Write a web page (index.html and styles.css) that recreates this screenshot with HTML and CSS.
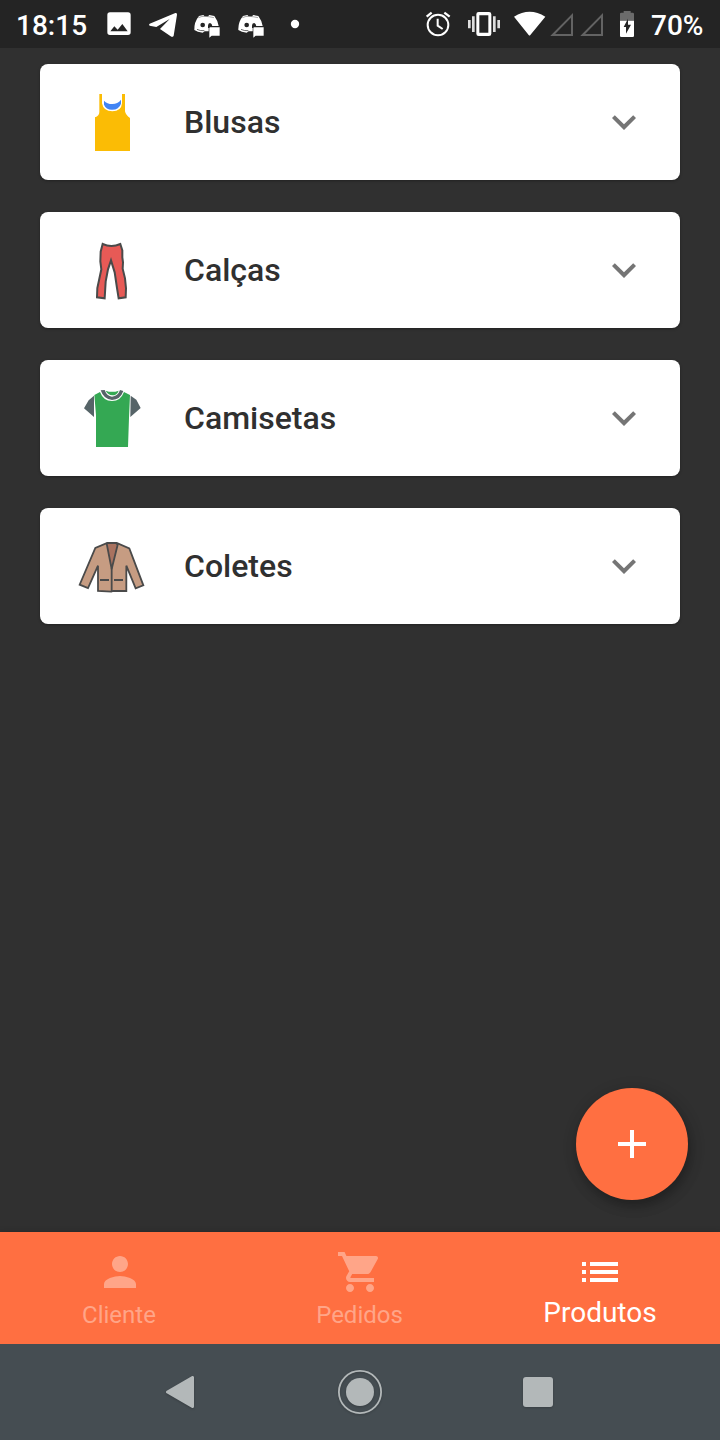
FILE: index.html
```html
<!DOCTYPE html>
<html lang="pt-BR">
<head>
<meta charset="utf-8">
<title>Produtos</title>
<link rel="stylesheet" href="styles.css">
</head>
<body>
<div class="screen">
  <header class="status">
    <span class="status-time">18:15</span>
    <svg class="status-note" viewBox="291 0 132 144"><path fill="#fff" fill-rule="evenodd" d="M330 37h54q8 0 8 8v52q0 8-8 8h-54q-8 0-8-8V45q0-8 8-8zM331 94h52L367 72 353 89 343 79z"/></svg>
    <svg class="status-note" viewBox="423 0 132 144"><path fill="#fff" d="M449 71L526 39Q532 38 531 44L521 107Q518 113 512 109L480 87 509 57 469 81 449 77Q445 74 449 71z"/></svg>
    <svg class="status-note" viewBox="555 0 132 144"><use href="#chat"/></svg>
    <svg class="status-note" viewBox="555 0 132 144">
      <g id="chat"><path fill="#fff" d="M597 48L610 45 614 49H624L628 45 643 48Q653 61 656 78H626V94H614L608 98Q592 96 583 90 582 66 597 48z"/><path d="M595 53Q605 48 617 49T642 53" fill="none" stroke="#242424" stroke-width="1.200"/><path d="M591 88Q600 93 613 92" fill="none" stroke="#242424" stroke-width="2"/><circle cx="608" cy="75" r="7" fill="#242424"/><path fill="#242424" d="M624 84V77Q624 69 630 69 636 70 637 79H628V84z"/><path fill="#fff" d="M630 82H659V107H635L628 113V84z"/></g>
    </svg>
    <svg class="status-note" viewBox="819 0 132 144"><circle cx="885" cy="72" r="12.500" fill="#fff"/></svg>
    <svg class="status-system" viewBox="42 0 645 144">
      <g fill="none" stroke="#fff" stroke-width="6"><circle cx="84" cy="75" r="31"/><path d="M83 56V77L98 87"/><path stroke-width="7" d="M50 50L65 38M103 38L119 50"/></g>
      <path fill="#fff" fill-rule="evenodd" d="M206 36H237Q244 36 244 43V101Q244 108 237 108H206Q199 108 199 101V43Q199 36 206 36zM208 46V98H235V46z"/>
      <path stroke="#fff" stroke-opacity=".85" stroke-width="8" d="M178 60V85M190 49V96M253 49V96M266 60V85"/>
      <path fill="#fff" d="M312 50Q359 20 406 50L361 105Q359 108 356 105z"/>
      <g fill="none" stroke="#636363" stroke-width="6"><path d="M428 105L486 46V105zM518 105L576 46V105z"/></g>
      <path fill="#6b6b6b" d="M630 62V41Q630 38 634 38H641V33H662V38H668Q672 38 672 42V62z"/><path fill="#fff" d="M630 62H672V107Q672 111 668 111H634Q630 111 630 107z"/><path fill="#242424" d="M654 56V74H663L648 101V81H641z"/>
    </svg>
    <span class="status-charge">70%</span>
  </header>
  <main class="list">
    <section class="card">
      <svg class="card-art" viewBox="48 -48 216 348"><path fill="#fbbc05" d="M118 42H126V70Q130 94 157 94T186 70V42H195V94Q197 105 210 114V213H105V112Q118 108 118 96z"/><path fill="#4285f4" d="M132 62Q141 72 157 72T183 59V71Q177 89 156 89 138 89 132 74z"/></svg>
      <h2 class="card-title">Blusas</h2>
      <svg class="chevron" viewBox="0 0 24 24"><path d="M16.590 8.590L12 13.170 7.410 8.590 6 10l6 6 6-6z"/></svg>
    </section>
    <section class="card">
      <svg class="card-art" viewBox="48 -54 216 348"><path fill="#e75a56" stroke="#4a4a4a" stroke-width="6" d="M128 42Q154 54 181 42L187 61V82L189 97 188 116 195 145 198 175 197 202 176 205 171 174 164 127 153 91 144 118 137 155 134 205 111 202 112 174 118 146 124 118 121 94 122 65z"/></svg>
      <h2 class="card-title">Calças</h2>
      <svg class="chevron" viewBox="0 0 24 24"><path d="M16.590 8.590L12 13.170 7.410 8.590 6 10l6 6 6-6z"/></svg>
    </section>
    <section class="card">
      <svg class="card-art" viewBox="48 -45 216 348"><path fill="#34a853" d="M103 60L120 51Q130 78 156 78T192 51L210 60 207 128 204 216H108V120z"/><path fill="#566468" d="M102 62V126L72 100 86 76zM212 62L229 74 242 99 211 126zM122 46L134 45Q140 63 156 65 174 63 180 45L190 48Q181 74 156 75 131 73 122 46z"/><path fill="#34a853" d="M137 47Q156 54 176 47 171 61 157 61 144 60 137 47z"/></svg>
      <h2 class="card-title">Camisetas</h2>
      <svg class="chevron" viewBox="0 0 24 24"><path d="M16.590 8.590L12 13.170 7.410 8.590 6 10l6 6 6-6z"/></svg>
    </section>
    <section class="card">
      <svg class="card-art" viewBox="48 -51 216 348"><g stroke="#4a4a4a" stroke-width="5.400"><path fill="#c69c82" d="M142 54H170L208 70 250 181 227 190 199 122V198H159L154 200 114 198V122L84 189 59 179 106 69z"/><path fill="#a9725f" d="M140 56L145 54H168L173 59 155 132z"/><path fill="none" d="M155 130V199M120 165H147M162 165H189"/></g></svg>
      <h2 class="card-title">Coletes</h2>
      <svg class="chevron" viewBox="0 0 24 24"><path d="M16.590 8.590L12 13.170 7.410 8.590 6 10l6 6 6-6z"/></svg>
    </section>
  </main>
  <button class="fab" aria-label="Adicionar"><svg class="fab-icon" viewBox="0 0 24 24"><path d="M19 13h-6v6h-2v-6H5v-2h6V5h2v6h6z"/></svg></button>
  <nav class="tabs">
    <a class="tab"><svg class="tab-icon" viewBox="0 0 24 24"><path d="M12 12c2.210 0 4-1.790 4-4s-1.790-4-4-4-4 1.790-4 4 1.790 4 4 4zm0 2c-2.670 0-8 1.340-8 4v2h16v-2c0-2.660-5.330-4-8-4z"/></svg><span class="tab-label">Cliente</span></a>
    <a class="tab tab-orders"><svg class="tab-icon" viewBox="0 0 24 24"><path d="M7 18c-1.100 0-1.990.9-1.990 2S5.900 22 7 22s2-.9 2-2-.9-2-2-2zM1 2v2h2l3.600 7.590-1.350 2.450c-.16.28-.25.61-.25.96 0 1.100.9 2 2 2h12v-2H7.420c-.14 0-.25-.11-.25-.25l.03-.12.9-1.630h7.450c.75 0 1.410-.41 1.750-1.030l3.580-6.490c.08-.14.12-.31.12-.48 0-.55-.45-1-1-1H5.210l-.94-2H1zm16 16c-1.100 0-1.990.9-1.990 2s.89 2 1.990 2 2-.9 2-2-.9-2-2-2z"/></svg><span class="tab-label">Pedidos</span></a>
    <a class="tab tab-active"><svg class="tab-icon" viewBox="0 0 24 24"><path d="M3 13h2v-2H3v2zm0 4h2v-2H3v2zm0-8h2V7H3v2zm4 4h14v-2H7v2zm0 4h14v-2H7v2zM7 7v2h14V7H7z"/></svg><span class="tab-label">Produtos</span></a>
  </nav>
  <footer class="system-nav">
    <svg class="system-icon" viewBox="0 0 48 48"><path stroke="#b3b8b9" stroke-width="3" stroke-linejoin="round" d="M9.500 24L34.500 9.500V38.500z"/></svg>
    <svg class="system-icon" viewBox="0 0 48 48"><circle cx="24" cy="24" r="21.100" fill="none" stroke="#b3b8b9" stroke-width="1.800"/><circle cx="24" cy="24" r="14"/></svg>
    <svg class="system-icon" viewBox="0 0 48 48"><rect x="9" y="9" width="30" height="30" rx="3"/></svg>
  </footer>
</div>
</body>
</html>
```
FILE: styles.css
```css
* { box-sizing: border-box; }
body { margin: 0; font-family: Roboto, sans-serif; background: #303030; }
.screen { position: relative; width: 720px; height: 1440px; display: flex; flex-direction: column; background: #303030; overflow: hidden; }
.status { height: 48px; flex: none; display: flex; align-items: flex-start; background: #242424; color: #fff; font-size: 28px; font-weight: 500; line-height: 52px; padding: 0 16px; }
.status svg { height: 48px; flex: none; }
.status-time { width: 81px; flex: none; }
.status-note { width: 44px; }
.status-system { width: 215px; margin-left: 107px; }
.status-charge { margin-left: 12px; white-space: nowrap; }
.list { flex: 1; display: flex; flex-direction: column; gap: 32px; padding: 16px 40px; }
.card { height: 116px; display: flex; align-items: center; padding: 0 32px 0 36px; border-radius: 8px; background: #fff; box-shadow: 0 1px 3px rgba(0, 0, 0, .3); }
.card-art { width: 72px; height: 116px; flex: none; }
.card-title { flex: 1; margin: 0 0 0 36px; font-size: 32px; font-weight: 500; line-height: 38px; color: #303030; }
.chevron { width: 48px; height: 48px; fill: #757575; }
.fab { position: absolute; right: 32px; bottom: 240px; width: 112px; height: 112px; border: 0; border-radius: 50%; padding: 0; display: flex; align-items: center; justify-content: center; background: #ff6f41; box-shadow: 2px 6px 12px rgba(0, 0, 0, .26), 2px 3px 18px rgba(0, 0, 0, .1); }
.fab-icon { width: 48px; height: 48px; fill: #fff; }
.tabs { height: 112px; flex: none; display: grid; grid-template-columns: repeat(3, 1fr); background: #ff6f41; box-shadow: 0 0 6px rgba(0, 0, 0, .2); }
.tab { display: flex; flex-direction: column; align-items: center; padding-top: 16px; color: #ffa588; }
.tab-icon { width: 48px; height: 48px; fill: currentColor; }
.tab-label { margin: 4px 2px 0 0; font-size: 24px; line-height: 30px; }
.tab-orders .tab-label { margin-right: 1px; }
.tab-active { color: #fff; }
.tab-active .tab-label { margin: 1px 0 0; font-size: 28px; line-height: 32px; }
.system-nav { height: 96px; flex: none; display: flex; justify-content: space-between; align-items: center; padding: 0 158px; background: #454d52; }
.system-icon { width: 48px; height: 48px; fill: #b3b8b9; filter: drop-shadow(0 1px 1px rgba(0, 0, 0, .2)); }
```
